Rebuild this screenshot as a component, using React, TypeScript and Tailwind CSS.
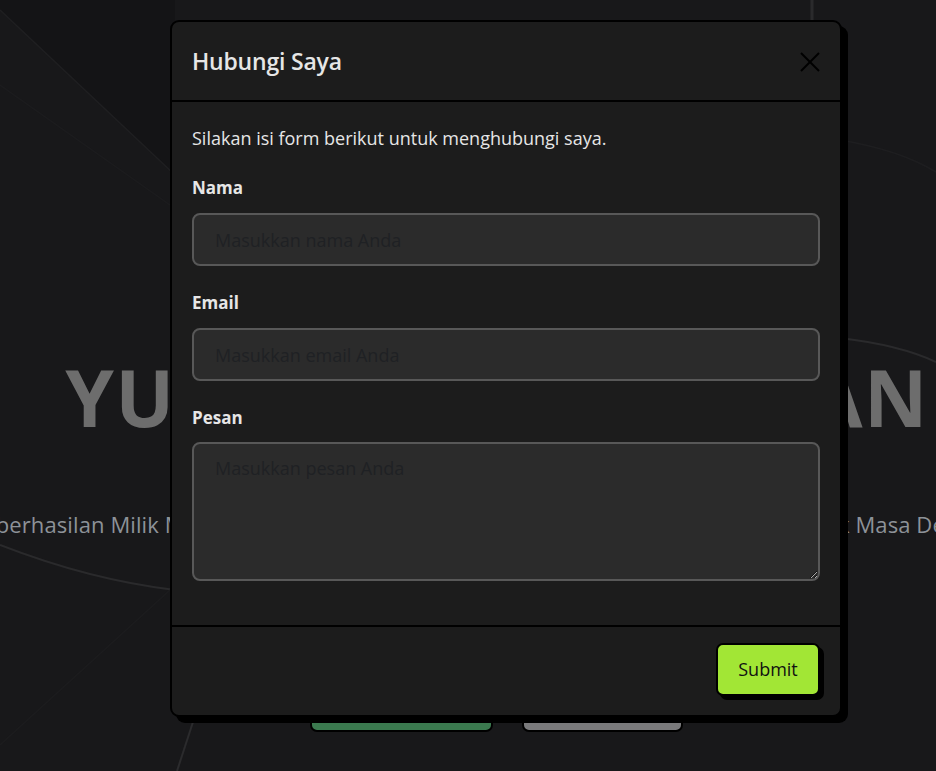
import React from "react";

function Backdrop() {
  return (
    <svg className="absolute inset-0 w-full h-full" viewBox="0 0 936 771" preserveAspectRatio="none">
      <polygon points="0,0 0,10 175,175 175,0" fill="#141416" />
      <line x1="0" y1="10" x2="175" y2="175" stroke="#1f1f21" strokeWidth="1.5" />
      <line x1="0" y1="85" x2="170" y2="205" stroke="#1c1c1e" strokeWidth="1.5" />
      <path d="M0 545 Q 90 580 175 590" stroke="#2a2a2c" strokeWidth="2" fill="none" />
      <path d="M840 338 Q 900 345 936 362" stroke="#2a2a2c" strokeWidth="2" fill="none" />
      <path d="M840 140 Q 900 150 936 172" stroke="#1e1e20" strokeWidth="1.5" fill="none" />
      <line x1="812" y1="0" x2="812" y2="22" stroke="#2a2a2c" strokeWidth="3" />
      <line x1="193" y1="722" x2="177" y2="771" stroke="#2b2b2d" strokeWidth="2" />
      <line x1="0" y1="745" x2="170" y2="590" stroke="#1c1c1e" strokeWidth="1.5" />
    </svg>
  );
}

export default function App() {
  return (
    <div
      className="relative w-full h-[771px] overflow-hidden bg-[#18181a]"
      style={{ fontFamily: '"Open Sans", "Noto Sans", sans-serif' }}
    >
      <Backdrop />
      <div className="relative flex flex-col items-center pt-[351px]">
        <div className="pl-[58px]">
          <h1 className="whitespace-nowrap text-[78px] leading-[1.2] font-bold tracking-[1.4px] text-[#6d6d6d]">
            YUK BANGUN IMPIAN
          </h1>
        </div>
        <div className="mt-[64px] pr-[33px]">
          <p className="whitespace-nowrap text-[22px] leading-[30px] tracking-[0.1px] text-[#8d9298]">
            Raih Keberhasilan Milik Mu Dengan Langkah Kecil Yang Selalu Konsisten Setiap Hari Untuk Masa Depan
          </p>
        </div>
        <div className="mt-[145px] flex gap-[29px] pl-[57px]">
          <div className="w-[183px] h-[48px] rounded-[7px] border-2 border-black bg-[#3b7a4f]" />
          <div className="w-[161px] h-[48px] rounded-[7px] border-2 border-black bg-[#7a7a7c]" />
        </div>
      </div>

      <div className="absolute left-[170px] top-[20px] w-[672px] h-[697px] flex flex-col rounded-[9px] border-2 border-black bg-[#1c1c1c] shadow-[6px_6px_0_0_#000]">
        <div className="h-[80px] shrink-0 flex items-center justify-between pl-[20px] pr-[19px] border-b-2 border-black">
          <h2 className="text-[23px] font-semibold text-[#e6e6e6] tracking-[-0.2px]">Hubungi Saya</h2>
          <svg width="22" height="22" viewBox="0 0 22 22" className="mt-[2px]">
            <line x1="2" y1="2" x2="20" y2="20" stroke="#000" strokeWidth="2" />
            <line x1="20" y1="2" x2="2" y2="20" stroke="#000" strokeWidth="2" />
          </svg>
        </div>
        <div className="flex-1 px-[20px] pt-[24px]">
          <p className="text-[18px] leading-[24px] text-[#e6e6e6] mb-[26px]">
            Silakan isi form berikut untuk menghubungi saya.
          </p>
          <label className="block text-[17px] leading-[24px] font-bold text-[#e6e6e6] mb-[13px]">Nama</label>
          <input
            className="block w-full h-[53px] rounded-[8px] border-2 border-[#585858] bg-[#2b2b2b] px-[21px] text-[18px] text-[#ddd] outline-none placeholder:text-[#1f2124] mb-[25px]"
            placeholder="Masukkan nama Anda"
          />
          <label className="block text-[17px] leading-[24px] font-bold text-[#e6e6e6] mb-[13px]">Email</label>
          <input
            className="block w-full h-[53px] rounded-[8px] border-2 border-[#585858] bg-[#2b2b2b] px-[21px] text-[18px] text-[#ddd] outline-none placeholder:text-[#1f2124] mb-[25px]"
            placeholder="Masukkan email Anda"
          />
          <label className="block text-[17px] leading-[24px] font-bold text-[#e6e6e6] mb-[12px]">Pesan</label>
          <textarea
            className="block w-full h-[139px] rounded-[8px] border-2 border-[#585858] bg-[#2b2b2b] px-[21px] pt-[11px] text-[18px] text-[#ddd] outline-none placeholder:text-[#1f2124]"
            placeholder="Masukkan pesan Anda"
          />
        </div>
        <div className="h-[90px] shrink-0 flex items-start justify-end border-t-2 border-black pt-[16px] pr-[20px]">
          <button className="w-[104px] h-[53px] rounded-[7px] border-2 border-black bg-[#a2e635] text-[18px] text-[#111] shadow-[4px_4px_0_0_#000]">
            Submit
          </button>
        </div>
      </div>
    </div>
  );
}
